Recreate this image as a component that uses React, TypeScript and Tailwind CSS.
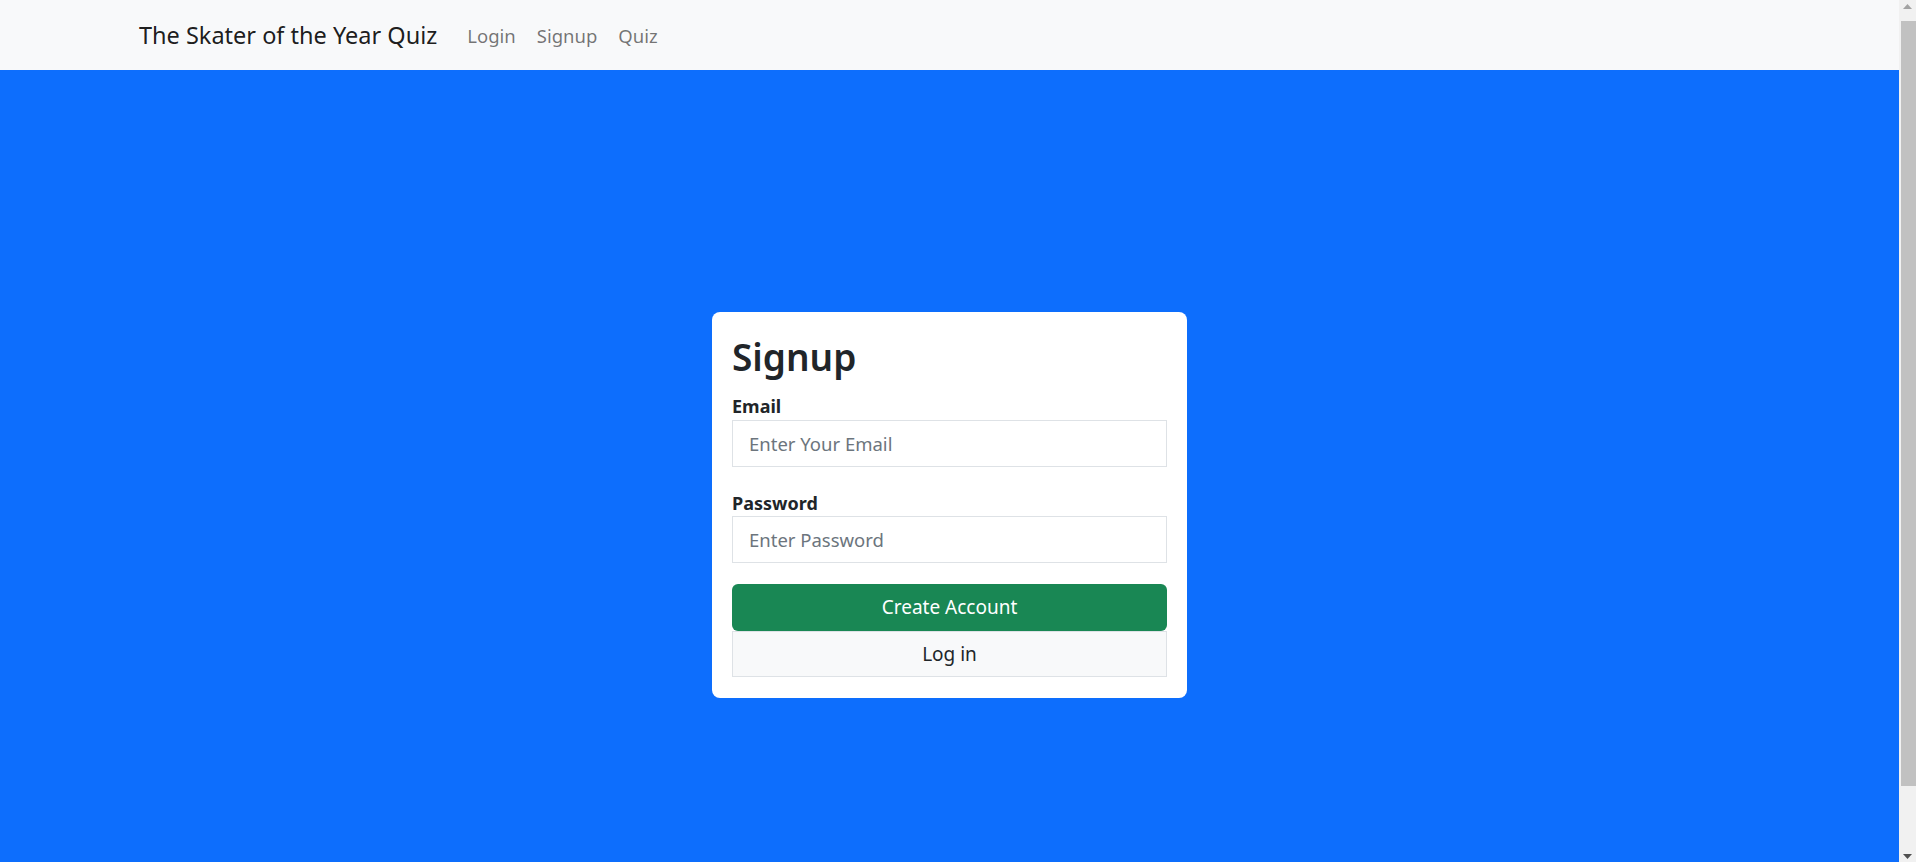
import { useState } from 'react';

const font = { fontFamily: '"Noto Sans", "Liberation Sans", sans-serif' };

const Navigation = () => {
  return (
    <nav className="bg-[#f8f9fa] h-[70px] shrink-0 flex items-center pl-[139px] pt-[1px]">
      <a href="#" className="text-[23.5px] text-black/90 mr-[30px]">
        The Skater of the Year Quiz
      </a>
      <div className="flex items-center gap-[21px] text-[18.5px] text-black/55">
        <a href="#">Login</a>
        <a href="#">Signup</a>
        <a href="#">Quiz</a>
      </div>
    </nav>
  );
};

const SignupForm = () => {
  const [email, setEmail] = useState('');
  const [password, setPassword] = useState('');

  return (
    <div className="w-[475px] bg-white rounded-lg px-[20px] pt-[21px] pb-[21px] mt-2">
      <h1 className="text-[37px] font-semibold text-[#212529] leading-[48px]">Signup</h1>
      <form onSubmit={(e) => e.preventDefault()} className="flex flex-col">
        <label className="text-[18px] font-bold text-[#212529] leading-[24px] mt-[13px] mb-[2px]">Email</label>
        <input
          type="email"
          value={email}
          onChange={(e) => setEmail(e.target.value)}
          placeholder="Enter Your Email"
          className="h-[47px] border border-[#dee2e6] px-[16px] text-[18.5px] text-[#212529] placeholder:text-[#6c757d] outline-none"
        />
        <label className="text-[18px] font-bold text-[#212529] leading-[24px] mt-[24px] mb-[1px]">Password</label>
        <input
          type="password"
          value={password}
          onChange={(e) => setPassword(e.target.value)}
          placeholder="Enter Password"
          className="h-[47px] border border-[#dee2e6] px-[16px] text-[18.5px] text-[#212529] placeholder:text-[#6c757d] outline-none"
        />
        <button type="submit" className="mt-[21px] h-[47px] bg-[#198754] text-white text-[19px] rounded-md">
          Create Account
        </button>
        <button type="button" className="h-[46px] bg-[#f8f9fa] border border-[#dee2e6] text-[#212529] text-[19px]">
          Log in
        </button>
      </form>
    </div>
  );
};

// browser scrollbar as it shows in the screenshot
const Scrollbar = () => (
  <div aria-hidden className="w-[17px] shrink-0 bg-[#f1f1f1] flex flex-col">
    <div className="h-[17px] flex items-center justify-center">
      <svg width="9" height="5" viewBox="0 0 9 5" className="mt-[-4px]">
        <path d="M0 5 L4.5 0 L9 5 Z" fill="#a3a3a3" />
      </svg>
    </div>
    <div className="flex-1 pt-[4px] pl-[2px]">
      <div className="h-[765px] bg-[#c1c1c1]" />
    </div>
    <div className="h-[17px] flex items-center justify-center">
      <svg width="9" height="5" viewBox="0 0 9 5" className="mt-[5px]">
        <path d="M0 0 L9 0 L4.5 5 Z" fill="#505050" />
      </svg>
    </div>
  </div>
);

export default function App() {
  return (
    <div style={font} className="h-screen overflow-hidden flex">
      <div className="flex-1 flex flex-col">
        <Navigation />
        <main className="bg-[#0d6efd] min-h-[862px] shrink-0 flex items-center justify-center">
          <SignupForm />
        </main>
      </div>
      <Scrollbar />
    </div>
  );
}
